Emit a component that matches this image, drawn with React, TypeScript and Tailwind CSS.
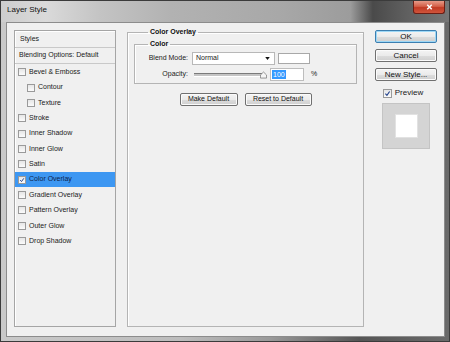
import type { ReactNode } from "react";

const styleRows: { label: string; indent?: boolean; checked?: boolean; selected?: boolean }[] = [
  { label: "Bevel & Emboss" },
  { label: "Contour", indent: true },
  { label: "Texture", indent: true },
  { label: "Stroke" },
  { label: "Inner Shadow" },
  { label: "Inner Glow" },
  { label: "Satin" },
  { label: "Color Overlay", checked: true, selected: true },
  { label: "Gradient Overlay" },
  { label: "Pattern Overlay" },
  { label: "Outer Glow" },
  { label: "Drop Shadow" },
];

function CheckBox({ checked, size = 8 }: { checked?: boolean; size?: number }) {
  return (
    <span
      className="flex shrink-0 items-center justify-center border border-[#9a9a9a] bg-[linear-gradient(180deg,#e6e6e6,#fbfbfb)]"
      style={{ width: size, height: size }}
    >
      {checked && (
        <svg viewBox="0 0 10 10" className="h-full w-full" aria-hidden>
          <path d="M2 5.2 L4.2 7.6 L8 2.2" fill="none" stroke="#1f3f8a" strokeWidth="1.6" />
        </svg>
      )}
    </span>
  );
}

function WinButton({ children, width, primary }: { children: ReactNode; width: string; primary?: boolean }) {
  return (
    <button
      type="button"
      className={`flex h-[13px] items-center justify-center rounded-[2px] border bg-[linear-gradient(180deg,#f4f4f4_0%,#ebebeb_50%,#dddddd_51%,#cfcfcf_100%)] text-[#111] ${width} ${
        primary ? "border-[#3c7fb1] shadow-[inset_0_0_0_1px_#9ed8f6]" : "border-[#707070] shadow-[inset_0_0_0_1px_#fbfbfb]"
      }`}
    >
      {children}
    </button>
  );
}

function StylesList() {
  return (
    <div className="flex w-[102px] flex-col border border-[#a5a5a5] shadow-[inset_1px_1px_0_#fff]">
      <div className="flex h-[17px] items-center border-b border-[#c9c9c9] pl-[5px] text-[7px]">Styles</div>
      <div className="flex h-[16px] items-center border-b border-[#c9c9c9] pl-[4px] text-[7px]">
        Blending Options: Default
      </div>
      <div className="flex flex-col pt-[0.5px]">
        {styleRows.map((row) => (
          <div
            key={row.label}
            className={`flex h-[15.36px] items-center gap-[3px] text-[7px] ${row.indent ? "pl-[12px]" : "pl-[3px]"} ${
              row.selected ? "bg-[#3d97f2] text-[#0d1f4a]" : "text-[#1a1a1a]"
            }`}
          >
            <CheckBox checked={row.checked} />
            <span>{row.label}</span>
          </div>
        ))}
      </div>
    </div>
  );
}

function OpacitySlider() {
  return (
    <div className="relative ml-[2px] flex h-[12px] w-[76px] items-center">
      <div className="h-[3px] w-[68px] border-t border-[#7a7a7a] bg-[#c4c4c4] shadow-[0_1px_0_#fff]" />
      <svg viewBox="0 0 8 8" className="absolute left-[66px] top-[2px] h-[8px] w-[7px]" aria-hidden>
        <path d="M0.5 7.5 L0.5 4 L4 0.6 L7.5 4 L7.5 7.5 Z" fill="#f5f5f5" stroke="#7d7d7d" strokeWidth="0.9" />
      </svg>
    </div>
  );
}

function ColorOverlayPanel() {
  return (
    <fieldset className="-mt-[3px] flex w-[237px] flex-col border border-[#b4b4b4] px-[6px] shadow-[inset_1px_1px_0_#fff]">
      <legend className="ml-[14px] px-[2px] text-[7px] font-bold leading-[10px] text-[#111]">Color Overlay</legend>
      <fieldset className="mt-[2px] flex flex-col border border-[#b4b4b4] pb-[2px] pl-0 shadow-[inset_1px_1px_0_#fff]">
        <legend className="ml-[13px] px-[2px] text-[7px] font-bold leading-[10px] text-[#111]">Color</legend>
        <div className="mt-[3px] flex items-center">
          <span className="w-[57px] pr-[4px] text-right text-[7px] text-[#222]">Blend Mode:</span>
          <div className="flex h-[13px] w-[83px] items-center justify-between border border-[#b8b8b8] bg-white pl-[3px] pr-[4px] text-[7px]">
            <span>Normal</span>
            <svg viewBox="0 0 6 4" className="h-[3px] w-[5px]" aria-hidden>
              <path d="M0 0 H6 L3 4 Z" fill="#111" />
            </svg>
          </div>
          <div className="ml-[3px] h-[11px] w-[32px] border border-[#a8a8a8] bg-white" />
        </div>
        <div className="mt-[3px] flex items-center">
          <span className="w-[57px] pr-[4px] text-right text-[7px] text-[#222]">Opacity:</span>
          <OpacitySlider />
          <div className="flex h-[13px] w-[34px] items-center border border-[#bdbdbd] bg-white pl-[1px] text-[7px]">
            <span className="bg-[#3399ff] px-[1px] leading-[9px] text-white">100</span>
          </div>
          <span className="ml-[7px] text-[7px] text-[#222]">%</span>
        </div>
      </fieldset>
      <div className="mt-[9px] flex justify-center gap-[7px] text-[7px]">
        <WinButton width="w-[58px]">Make Default</WinButton>
        <WinButton width="w-[67px]">Reset to Default</WinButton>
      </div>
    </fieldset>
  );
}

function SideButtons() {
  return (
    <div className="flex w-[62px] flex-col items-center text-[8px]">
      <div className="flex w-full flex-col gap-[6px]">
        <WinButton width="w-full" primary>
          OK
        </WinButton>
        <WinButton width="w-full">Cancel</WinButton>
        <WinButton width="w-full">New Style...</WinButton>
      </div>
      <label className="mt-[6px] flex items-center gap-[3px] pr-[6px]">
        <CheckBox checked size={9} />
        <span>Preview</span>
      </label>
      <div className="mt-[4px] flex h-[46px] w-[48px] items-center justify-center border border-[#c4c4c4] bg-[#d4d4d4]">
        <div className="h-[24px] w-[23px] border border-[#e2e2e2] bg-white" />
      </div>
    </div>
  );
}

export default function App() {
  return (
    <div className="flex h-[342px] w-[450px] flex-col border border-[#3b3b3b] bg-[linear-gradient(90deg,#c9c9c9_0%,#bdbdbd_40%,#9a9a9a_60%,#555_80%,#6a6a6a_100%)] font-['Liberation_Sans',Arial,sans-serif] text-[#1a1a1a]">
      <div className="flex h-[21px] shrink-0 items-start justify-between bg-[linear-gradient(90deg,#cdcdcd_0%,#dadada_10%,#c4c4c4_22%,#b2b2b2_38%,#a8a8a8_62%,#9c9c9c_78%,#4a4a4a_83%,#5e5e5e_90%,#777_100%)]">
        <span className="pl-[6px] pt-[4px] text-[8px] leading-[10px] text-[#111]">Layer Style</span>
        <div className="mr-[4px] flex h-[13px] w-[32px] items-center justify-center rounded-b-[3px] border border-t-0 border-[#6b1e14] bg-[linear-gradient(180deg,#e79a88_0%,#d35f48_45%,#c13a24_55%,#d0553c_100%)]">
          <svg viewBox="0 0 8 8" className="h-[6px] w-[7px]" aria-hidden>
            <path d="M1 1 L7 7 M7 1 L1 7" stroke="#fff" strokeWidth="2" />
          </svg>
        </div>
      </div>
      <div className="mb-[4px] ml-[5px] mr-[4px] flex flex-1 gap-[11px] border border-[#8c8c8c] bg-[#f0f0f0] pb-[9px] pl-[7px] pr-[7px] pt-[7px]">
        <StylesList />
        <ColorOverlayPanel />
        <SideButtons />
      </div>
    </div>
  );
}
